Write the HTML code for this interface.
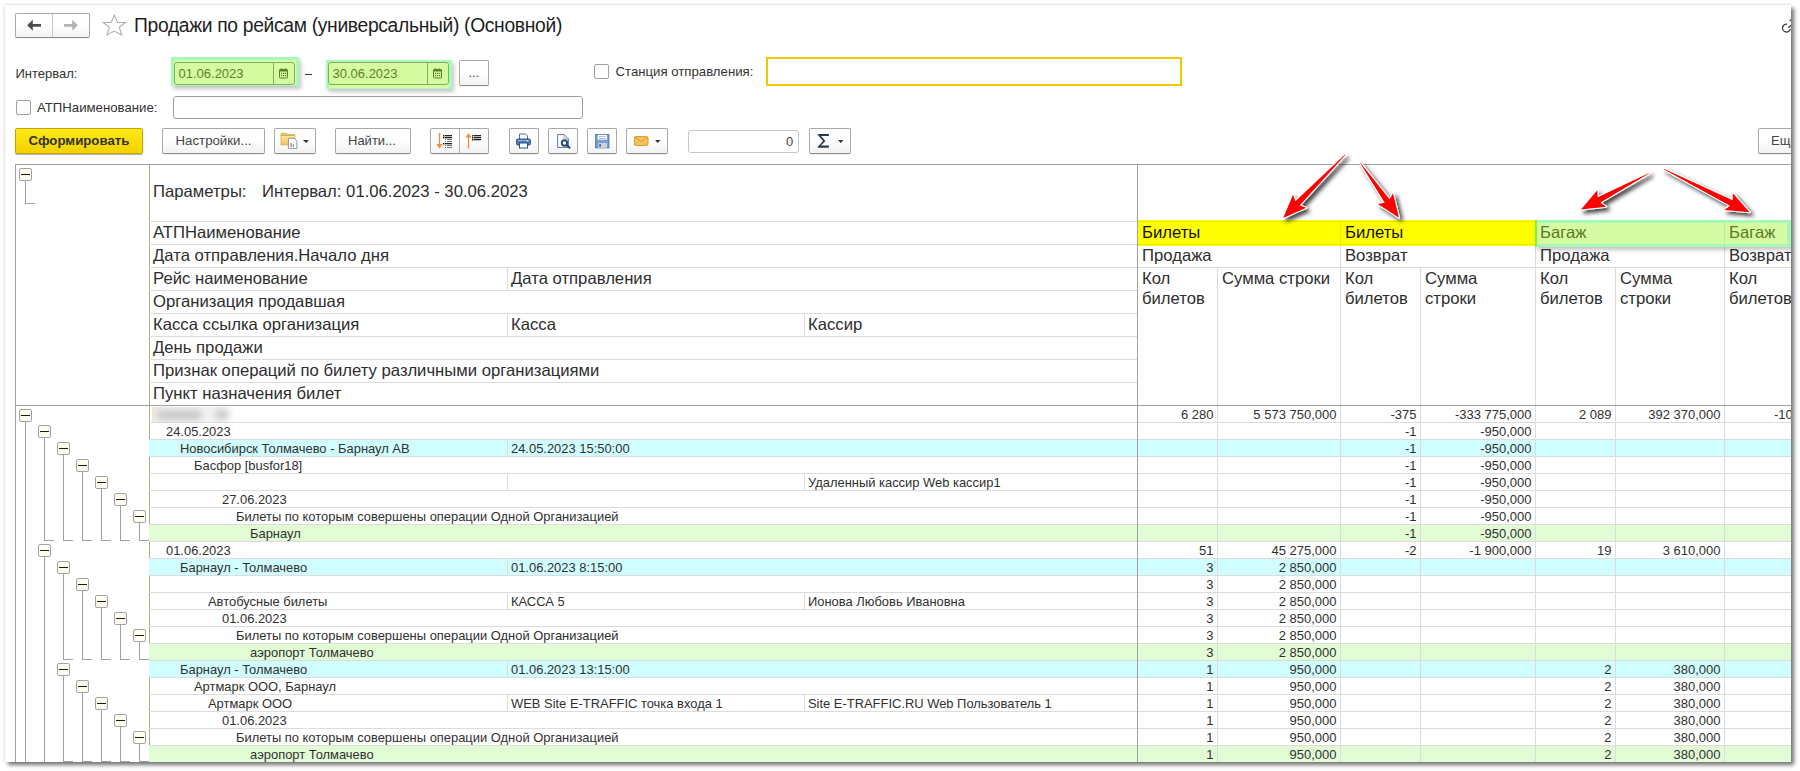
<!DOCTYPE html>
<html><head><meta charset="utf-8"><style>
html,body{margin:0;padding:0;background:#fff;}
body{width:1800px;height:771px;overflow:hidden;position:relative;font-family:"Liberation Sans", sans-serif;color:#333;}
.a{position:absolute;}
.t{position:absolute;white-space:pre;line-height:1;}
#frame{position:absolute;left:5px;top:5px;width:1786px;height:757px;background:#fff;
 box-shadow:3px 3px 4px rgba(0,0,0,0.55), -1px -1px 2px rgba(0,0,0,0.10);overflow:hidden;}
#in{position:absolute;left:-5px;top:-5px;width:1800px;height:771px;}
.btn{position:absolute;box-sizing:border-box;border:1px solid #a9a9a9;border-radius:2px;
 background:linear-gradient(#ffffff 0%,#ffffff 45%,#f2f2f2 100%);border-bottom-color:#8f8f8f;box-shadow:0 0.5px 0.5px rgba(0,0,0,0.12);}
.hl{position:absolute;background:#dcdcdc;height:1px;}
.vl{position:absolute;background:#dcdcdc;width:1px;}
.ht{position:absolute;white-space:pre;font-size:16.68px;color:#2e2e2e;line-height:23px;}
.dt{position:absolute;white-space:pre;font-size:12.93px;color:#303030;line-height:17px;}
.num{position:absolute;white-space:pre;font-size:13px;color:#303030;line-height:17px;text-align:right;}
.box{position:absolute;width:11px;height:11px;border:1px solid #a3a3a3;border-radius:2px;background:#fffdf0;}
.box:after{content:"";position:absolute;left:1px;top:5px;width:9px;height:1px;background:#1a1a1a;}
.tl{position:absolute;background:#a0a0a0;}
</style></head><body>
<div id="frame"><div id="in">

<div class="btn" style="left:15px;top:13px;width:75px;height:25px;"></div>
<div class="a" style="left:52px;top:14px;width:1px;height:23px;background:#c8c8c8"></div>
<svg class="a" style="left:15px;top:13px" width="75" height="25">
<path d="M12.2 12.3 L17.8 6.8 L17.8 10.9 L26 10.9 L26 13.8 L17.8 13.8 L17.8 17.8 Z" fill="#4d4d4d"/>
<path d="M62.9 12.3 L57.2 6.8 L57.2 10.9 L49 10.9 L49 13.8 L57.2 13.8 L57.2 17.8 Z" fill="#b3b3b3"/>
</svg>
<svg class="a" style="left:102px;top:14px" width="25" height="23">
<path d="M12.3 1.2 L15.6 8.5 L23.4 8.5 L17.3 13.3 L19.6 21 L12.3 17.1 L5 21 L7.3 13.3 L1.2 8.5 L9 8.5 Z" fill="none" stroke="#a9b0b8" stroke-width="1.1" stroke-linejoin="miter"/>
</svg>
<div class="t" style="left:134px;top:15.5px;font-size:19.3px;letter-spacing:-0.33px;color:#1e1e1e;">Продажи по рейсам (универсальный) (Основной)</div>
<svg class="a" style="left:1779px;top:17px" width="20" height="18">
<path d="M8.2 7.1 A4 4 0 1 0 11.4 12" fill="none" stroke="#3a3a3a" stroke-width="1.3"/>
<path d="M9.3 10.7 L12.3 8.2" fill="none" stroke="#3a3a3a" stroke-width="1.3"/>
<path d="M10.6 4 L12.3 2.8" fill="none" stroke="#3a3a3a" stroke-width="1.3"/>
</svg>
<div class="t" style="left:15.5px;top:67px;font-size:13px;color:#333;">Интервал:</div>
<div class="a" style="left:171px;top:57px;width:128px;height:29px;background:#a6fbb8;box-shadow:2px 3px 4px rgba(60,40,60,0.28);"></div>
<div class="a" style="left:173.5px;top:60px;width:122.5px;height:25px;background:#d6fca5;"></div>
<div class="a" style="left:173.5px;top:62px;width:121.5px;height:23px;box-sizing:border-box;border:1px solid #86ad66;border-radius:3px;background:#d5fca0;"></div>
<div class="a" style="left:273px;top:62px;width:1px;height:23px;background:#8aab5e;"></div>
<div class="t" style="left:178.5px;top:67px;font-size:13px;color:#62802a;">01.06.2023</div>
<svg class="a" style="left:279px;top:68px" width="10" height="11">
<rect x="0.5" y="1.5" width="8" height="8.5" rx="0.8" fill="none" stroke="#5d7d2a" stroke-width="1"/>
<rect x="0.5" y="1.5" width="8" height="2" fill="#5d7d2a"/>
<rect x="1.8" y="0.3" width="1.1" height="2" fill="#5d7d2a"/><rect x="6.1" y="0.3" width="1.1" height="2" fill="#5d7d2a"/>
<g fill="#5d7d2a"><rect x="2" y="4.8" width="1.2" height="1.2"/><rect x="4" y="4.8" width="1.2" height="1.2"/><rect x="6" y="4.8" width="1.2" height="1.2"/>
<rect x="2" y="7" width="1.2" height="1.2"/><rect x="4" y="7" width="1.2" height="1.2"/><rect x="6" y="7" width="1.2" height="1.2"/></g>
</svg>
<div class="a" style="left:305px;top:74px;width:7px;height:1px;background:#333;"></div>
<div class="a" style="left:326px;top:60px;width:126px;height:29px;background:#a6fbb8;box-shadow:2px 3px 4px rgba(60,40,60,0.28);"></div>
<div class="a" style="left:328.5px;top:63px;width:120.5px;height:25px;background:#d6fca5;"></div>
<div class="a" style="left:327.5px;top:62px;width:121.5px;height:23px;box-sizing:border-box;border:1px solid #86ad66;border-radius:3px;background:#d5fca0;"></div>
<div class="a" style="left:427px;top:62px;width:1px;height:23px;background:#8aab5e;"></div>
<div class="t" style="left:332.5px;top:67px;font-size:13px;color:#62802a;">30.06.2023</div>
<svg class="a" style="left:433px;top:68px" width="10" height="11">
<rect x="0.5" y="1.5" width="8" height="8.5" rx="0.8" fill="none" stroke="#5d7d2a" stroke-width="1"/>
<rect x="0.5" y="1.5" width="8" height="2" fill="#5d7d2a"/>
<rect x="1.8" y="0.3" width="1.1" height="2" fill="#5d7d2a"/><rect x="6.1" y="0.3" width="1.1" height="2" fill="#5d7d2a"/>
<g fill="#5d7d2a"><rect x="2" y="4.8" width="1.2" height="1.2"/><rect x="4" y="4.8" width="1.2" height="1.2"/><rect x="6" y="4.8" width="1.2" height="1.2"/>
<rect x="2" y="7" width="1.2" height="1.2"/><rect x="4" y="7" width="1.2" height="1.2"/><rect x="6" y="7" width="1.2" height="1.2"/></g>
</svg>
<div class="btn" style="left:459px;top:60px;width:30px;height:26px;"></div>
<div class="t" style="left:468.5px;top:66px;font-size:13px;color:#444;">...</div>
<div class="a" style="left:594px;top:64px;width:15px;height:15px;box-sizing:border-box;border:1px solid #a0a0a0;border-radius:2px;background:#fff;"></div>
<div class="t" style="left:615.5px;top:65px;font-size:13.2px;color:#333;">Станция отправления:</div>
<div class="a" style="left:766px;top:57px;width:416px;height:29px;box-sizing:border-box;border:2px solid #f4c800;"></div>
<div class="a" style="left:16px;top:100px;width:15px;height:15px;box-sizing:border-box;border:1px solid #a0a0a0;border-radius:2px;background:#fff;"></div>
<div class="t" style="left:37px;top:101px;font-size:13.2px;color:#333;">АТПНаименование:</div>
<div class="a" style="left:173px;top:96px;width:410px;height:23px;box-sizing:border-box;border:1px solid #a0a0a0;border-radius:3px;background:#fff;"></div>
<div class="a" style="left:15px;top:128px;width:128px;height:26px;box-sizing:border-box;border:1px solid #c3a600;border-radius:2px;background:linear-gradient(#ffe81a,#f2d200);box-shadow:0 1px 1px rgba(0,0,0,0.3);"></div>
<div class="t" style="left:28.5px;top:133.5px;font-size:13.25px;font-weight:bold;color:#333;">Сформировать</div>
<div class="btn" style="left:162px;top:128px;width:103px;height:26px;"></div>
<div class="t" style="left:175.5px;top:134px;font-size:13.25px;color:#444;">Настройки...</div>
<div class="btn" style="left:274px;top:128px;width:42px;height:26px;"></div>
<svg class="a" style="left:280px;top:132px" width="32" height="18">
<defs><linearGradient id="fg" x1="0" y1="0" x2="0" y2="1"><stop offset="0" stop-color="#fbe7a2"/><stop offset="1" stop-color="#eec35a"/></linearGradient></defs>
<path d="M1 4 L1 2 Q1 1.2 1.8 1.2 L6.2 1.2 L7.6 2.6 L14.4 2.6 L14.4 4 Z" fill="#eec35a" stroke="#d2a347" stroke-width="0.7"/>
<rect x="1" y="3.6" width="14" height="9.3" fill="url(#fg)" stroke="#d2a347" stroke-width="0.7"/>
<path d="M8.4 6.3 L14.5 6.3 L16.9 8.7 L16.9 16.4 L8.4 16.4 Z" fill="#fff" stroke="#7d8fa3" stroke-width="0.9"/>
<rect x="10.6" y="11" width="1" height="4" fill="#e23a3a"/><rect x="12.8" y="12" width="1" height="3" fill="#2ea84a"/>
<path d="M23 8 L29 8 L26 11 Z" fill="#333"/>
</svg>
<div class="btn" style="left:335px;top:128px;width:76px;height:26px;"></div>
<div class="t" style="left:348px;top:134px;font-size:13px;color:#444;">Найти...</div>
<div class="btn" style="left:430px;top:128px;width:59px;height:26px;"></div>
<div class="a" style="left:459px;top:129px;width:1px;height:24px;background:#b0b0b0;"></div>
<svg class="a" style="left:430px;top:128px" width="59" height="26">
<path d="M9.5 5 L9.5 18" stroke="#f08a3c" stroke-width="1.3"/>
<path d="M6.5 16 L12.5 16 L9.5 20.5 Z" fill="#f08a3c"/>
<g fill="#222"><rect x="13" y="7" width="1.5" height="1.5"/><rect x="15" y="7" width="7" height="1.3"/>
<rect x="13" y="9" width="1.5" height="1.5"/><rect x="15" y="9" width="7" height="1.3"/>
<rect x="13" y="15" width="1.5" height="1.5"/><rect x="15" y="15" width="7" height="1.3"/></g>
<g fill="#777"><rect x="15" y="11" width="1" height="1"/><rect x="17" y="11" width="5" height="1"/>
<rect x="15" y="13" width="1" height="1"/><rect x="17" y="13" width="5" height="1"/>
<rect x="15" y="17" width="1" height="1"/><rect x="17" y="17" width="5" height="1"/>
<rect x="15" y="19" width="1" height="1"/><rect x="17" y="19" width="5" height="1"/></g>
<path d="M38.5 8 L38.5 20.5" stroke="#f08a3c" stroke-width="1.3"/>
<path d="M35.5 9.5 L41.5 9.5 L38.5 5 Z" fill="#f08a3c"/>
<g fill="#222"><rect x="42" y="7" width="1.5" height="1.5"/><rect x="44" y="7" width="7" height="1.3"/>
<rect x="42" y="9" width="1.5" height="1.5"/><rect x="44" y="9" width="7" height="1.3"/>
<rect x="42" y="11" width="1.5" height="1.5"/><rect x="44" y="11" width="7" height="1.3"/></g>
</svg>
<div class="btn" style="left:509px;top:128px;width:30px;height:26px;"></div>
<svg class="a" style="left:509px;top:128px" width="30" height="26">
<path d="M10.5 6 L16.5 6 L18.5 8 L18.5 12 L10.5 12 Z" fill="#fff" stroke="#4a6d99" stroke-width="1"/>
<rect x="7.5" y="11" width="14" height="6" rx="1.5" fill="#4f79b0" stroke="#2f5283" stroke-width="1"/>
<rect x="9" y="12" width="11" height="1" fill="#9db7d8"/>
<rect x="10.5" y="15" width="8" height="5" fill="#fff" stroke="#2f5283" stroke-width="1"/>
<rect x="18" y="12.5" width="1" height="1" fill="#fff"/>
</svg>
<div class="btn" style="left:548px;top:128px;width:30px;height:26px;"></div>
<svg class="a" style="left:548px;top:128px" width="30" height="26">
<path d="M9.6 6.6 L16.1 6.6 L20.4 10.9 L20.4 19.4 L9.6 19.4 Z" fill="#fff" stroke="#4a6a92" stroke-width="0.9"/>
<path d="M16.1 6.6 L16.1 10.9 L20.4 10.9" fill="none" stroke="#7d93ad" stroke-width="0.7"/>
<circle cx="16.5" cy="15" r="2.7" fill="#fff" stroke="#1f4c7a" stroke-width="1.9"/>
<path d="M18.4 17 L22.2 20.3" stroke="#1f4c7a" stroke-width="2.1"/>
</svg>
<div class="btn" style="left:587px;top:128px;width:30px;height:26px;"></div>
<svg class="a" style="left:587px;top:128px" width="30" height="26">
<rect x="8.7" y="6.6" width="13.2" height="13.2" fill="#7ba0d8" stroke="#4d72aa" stroke-width="1"/>
<rect x="10.7" y="6.9" width="9.2" height="4.8" fill="#fff"/>
<rect x="11.7" y="8.3" width="7" height="0.8" fill="#8aa8d4"/><rect x="11.7" y="10" width="7" height="0.8" fill="#8aa8d4"/>
<rect x="11.2" y="15" width="8.6" height="4.8" fill="#cdd6da"/>
<rect x="12.2" y="16" width="1.8" height="3" fill="#4d72aa"/>
</svg>
<div class="btn" style="left:626px;top:128px;width:42px;height:26px;"></div>
<svg class="a" style="left:626px;top:128px" width="42" height="26">
<rect x="8.4" y="8.6" width="13.6" height="8.8" rx="1.5" fill="#f3c660" stroke="#d4962a" stroke-width="1"/>
<path d="M9 9.4 L15.2 13.6 L21.5 9.4" fill="none" stroke="#d4962a" stroke-width="0.9"/>
<path d="M9 17 L13.5 12.8 M21.5 17 L17 12.8" fill="none" stroke="#e0aa45" stroke-width="0.7"/>
<path d="M29 12 L34.5 12 L31.75 15 Z" fill="#333"/>
</svg>
<div class="a" style="left:688px;top:130px;width:111px;height:23px;box-sizing:border-box;border:1px solid #c8c8c8;border-radius:3px;background:#fff;"></div>
<div class="t" style="left:786px;top:135px;font-size:13px;color:#444;">0</div>
<div class="btn" style="left:809px;top:128px;width:42px;height:26px;"></div>
<svg class="a" style="left:809px;top:128px" width="42" height="26">
<path d="M8.7 5.9 L19.9 5.9 L19.9 8.1 L12 8.1 L16.4 12.9 L12 17.6 L19.9 17.6 L19.9 19.8 L8.7 19.8 L8.7 19.1 L14 12.9 L8.7 6.7 Z" fill="#2a3a46"/>
<path d="M29 12 L34.5 12 L31.75 15 Z" fill="#333"/>
</svg>
<div class="btn" style="left:1758px;top:128px;width:60px;height:26px;"></div>
<div class="t" style="left:1771px;top:134px;font-size:13px;color:#444;">Ещё</div>
<div class="a" style="left:15px;top:164px;width:1776px;height:1px;background:#a0a0a0;"></div>
<div class="a" style="left:15px;top:164px;width:1px;height:600px;background:#a0a0a0;"></div>
<div class="a" style="left:15px;top:405px;width:1776px;height:1px;background:#a0a0a0;"></div>
<div class="a" style="left:149px;top:165px;width:1px;height:240px;background:#b3a97f;"></div>
<div class="hl" style="left:149px;top:221px;width:988px;"></div>
<div class="hl" style="left:149px;top:244px;width:988px;"></div>
<div class="hl" style="left:149px;top:267px;width:988px;"></div>
<div class="hl" style="left:149px;top:290px;width:988px;"></div>
<div class="hl" style="left:149px;top:313px;width:988px;"></div>
<div class="hl" style="left:149px;top:336px;width:988px;"></div>
<div class="hl" style="left:149px;top:359px;width:988px;"></div>
<div class="hl" style="left:149px;top:382px;width:988px;"></div>
<div class="hl" style="left:1138px;top:221px;width:653px;"></div>
<div class="hl" style="left:1138px;top:244px;width:653px;"></div>
<div class="hl" style="left:1138px;top:267px;width:653px;"></div>
<div class="vl" style="left:507px;top:268px;height:22px;"></div>
<div class="vl" style="left:507px;top:314px;height:22px;"></div>
<div class="vl" style="left:804px;top:314px;height:22px;"></div>
<div class="vl" style="left:1340px;top:222px;height:183px;"></div>
<div class="vl" style="left:1535px;top:222px;height:183px;"></div>
<div class="vl" style="left:1724px;top:222px;height:183px;"></div>
<div class="vl" style="left:1217px;top:268px;height:137px;"></div>
<div class="vl" style="left:1420px;top:268px;height:137px;"></div>
<div class="vl" style="left:1615px;top:268px;height:137px;"></div>
<div class="box" style="left:19px;top:168px;"></div>
<div class="tl" style="left:25px;top:180px;width:1px;height:23px;"></div>
<div class="tl" style="left:25px;top:203px;width:10px;height:1px;"></div>
<div class="ht" style="left:153px;top:180px;">Параметры:</div>
<div class="ht" style="left:262px;top:180px;">Интервал: 01.06.2023 - 30.06.2023</div>
<div class="ht" style="left:153px;top:221px;">АТПНаименование</div>
<div class="ht" style="left:153px;top:244px;">Дата отправления.Начало дня</div>
<div class="ht" style="left:153px;top:267px;">Рейс наименование</div>
<div class="ht" style="left:153px;top:290px;">Организация продавшая</div>
<div class="ht" style="left:153px;top:313px;">Касса ссылка организация</div>
<div class="ht" style="left:153px;top:336px;">День продажи</div>
<div class="ht" style="left:153px;top:359px;">Признак операций по билету различными организациями</div>
<div class="ht" style="left:153px;top:382px;">Пункт назначения билет</div>
<div class="ht" style="left:511px;top:267px;">Дата отправления</div>
<div class="ht" style="left:511px;top:313px;">Касса</div>
<div class="ht" style="left:808px;top:313px;">Кассир</div>
<div class="a" style="left:1138px;top:220px;width:397px;height:26px;background:#ffff00;"></div>
<div class="a" style="left:1138px;top:221px;width:397px;height:1px;background:#ecec00;"></div>
<div class="a" style="left:1138px;top:244px;width:397px;height:1px;background:#ecec00;"></div>
<div class="a" style="left:1340px;top:220px;width:1px;height:26px;background:#ecec00;"></div>
<div class="a" style="left:1535px;top:220px;width:256px;height:27px;background:#a6f8b6;box-shadow:2px 3px 4px rgba(60,40,60,0.28);"></div>
<div class="a" style="left:1535px;top:220px;width:2px;height:27px;background:#7ef050;"></div>
<div class="a" style="left:1537px;top:222.5px;width:250px;height:21.5px;background:#d5fca5;"></div>
<div class="a" style="left:1724px;top:222px;width:1px;height:22px;background:#bfe8a0;"></div>
<div class="ht" style="left:1142px;top:221px;color:#111;">Билеты</div>
<div class="ht" style="left:1345px;top:221px;color:#111;">Билеты</div>
<div class="ht" style="left:1540px;top:221px;color:#5d7a20;">Багаж</div>
<div class="ht" style="left:1729px;top:221px;color:#5d7a20;">Багаж</div>
<div class="ht" style="left:1142px;top:244px;">Продажа</div>
<div class="ht" style="left:1345px;top:244px;">Возврат</div>
<div class="ht" style="left:1540px;top:244px;">Продажа</div>
<div class="ht" style="left:1729px;top:244px;">Возврат</div>
<div class="ht" style="left:1142px;top:267px;">Кол</div>
<div class="ht" style="left:1142px;top:286.5px;">билетов</div>
<div class="ht" style="left:1222px;top:267px;">Сумма строки</div>
<div class="ht" style="left:1345px;top:267px;">Кол</div>
<div class="ht" style="left:1345px;top:286.5px;">билетов</div>
<div class="ht" style="left:1425px;top:267px;">Сумма</div>
<div class="ht" style="left:1425px;top:286.5px;">строки</div>
<div class="ht" style="left:1540px;top:267px;">Кол</div>
<div class="ht" style="left:1540px;top:286.5px;">билетов</div>
<div class="ht" style="left:1620px;top:267px;">Сумма</div>
<div class="ht" style="left:1620px;top:286.5px;">строки</div>
<div class="ht" style="left:1729px;top:267px;">Кол</div>
<div class="ht" style="left:1729px;top:286.5px;">билетов</div>
<div class="a" style="left:149px;top:406px;width:1px;height:16px;background:#b3a97f;"></div>
<div class="hl" style="left:149px;top:422px;width:1642px;"></div>
<div class="vl" style="left:1217px;top:406px;height:16px;"></div>
<div class="vl" style="left:1340px;top:406px;height:16px;"></div>
<div class="vl" style="left:1420px;top:406px;height:16px;"></div>
<div class="vl" style="left:1535px;top:406px;height:16px;"></div>
<div class="vl" style="left:1615px;top:406px;height:16px;"></div>
<div class="vl" style="left:1724px;top:406px;height:16px;"></div>
<div class="num" style="left:1013.5px;width:200px;top:406px;">6 280</div>
<div class="num" style="left:1136.5px;width:200px;top:406px;">5 573 750,000</div>
<div class="num" style="left:1216.5px;width:200px;top:406px;">-375</div>
<div class="num" style="left:1331.5px;width:200px;top:406px;">-333 775,000</div>
<div class="num" style="left:1411.5px;width:200px;top:406px;">2 089</div>
<div class="num" style="left:1520.5px;width:200px;top:406px;">392 370,000</div>
<div class="num" style="left:1600.0px;width:200px;top:406px;">-108</div>
<div class="a" style="left:149px;top:423px;width:1px;height:16px;background:#b3a97f;"></div>
<div class="hl" style="left:149px;top:439px;width:1642px;"></div>
<div class="vl" style="left:1217px;top:423px;height:16px;"></div>
<div class="vl" style="left:1340px;top:423px;height:16px;"></div>
<div class="vl" style="left:1420px;top:423px;height:16px;"></div>
<div class="vl" style="left:1535px;top:423px;height:16px;"></div>
<div class="vl" style="left:1615px;top:423px;height:16px;"></div>
<div class="vl" style="left:1724px;top:423px;height:16px;"></div>
<div class="dt" style="left:166px;top:423px;">24.05.2023</div>
<div class="num" style="left:1216.5px;width:200px;top:423px;">-1</div>
<div class="num" style="left:1331.5px;width:200px;top:423px;">-950,000</div>
<div class="a" style="left:149px;top:440px;width:1642px;height:16px;background:#d0fdfd;"></div>
<div class="hl" style="left:149px;top:456px;width:1642px;"></div>
<div class="vl" style="left:1217px;top:440px;height:16px;"></div>
<div class="vl" style="left:1340px;top:440px;height:16px;"></div>
<div class="vl" style="left:1420px;top:440px;height:16px;"></div>
<div class="vl" style="left:1535px;top:440px;height:16px;"></div>
<div class="vl" style="left:1615px;top:440px;height:16px;"></div>
<div class="vl" style="left:1724px;top:440px;height:16px;"></div>
<div class="vl" style="left:507px;top:440px;height:16px;"></div>
<div class="dt" style="left:180px;top:440px;">Новосибирск Толмачево - Барнаул АВ</div>
<div class="dt" style="left:511px;top:440px;">24.05.2023 15:50:00</div>
<div class="num" style="left:1216.5px;width:200px;top:440px;">-1</div>
<div class="num" style="left:1331.5px;width:200px;top:440px;">-950,000</div>
<div class="a" style="left:149px;top:457px;width:1px;height:16px;background:#b3a97f;"></div>
<div class="hl" style="left:149px;top:473px;width:1642px;"></div>
<div class="vl" style="left:1217px;top:457px;height:16px;"></div>
<div class="vl" style="left:1340px;top:457px;height:16px;"></div>
<div class="vl" style="left:1420px;top:457px;height:16px;"></div>
<div class="vl" style="left:1535px;top:457px;height:16px;"></div>
<div class="vl" style="left:1615px;top:457px;height:16px;"></div>
<div class="vl" style="left:1724px;top:457px;height:16px;"></div>
<div class="dt" style="left:194px;top:457px;">Басфор [busfor18]</div>
<div class="num" style="left:1216.5px;width:200px;top:457px;">-1</div>
<div class="num" style="left:1331.5px;width:200px;top:457px;">-950,000</div>
<div class="a" style="left:149px;top:474px;width:1px;height:16px;background:#b3a97f;"></div>
<div class="hl" style="left:149px;top:490px;width:1642px;"></div>
<div class="vl" style="left:1217px;top:474px;height:16px;"></div>
<div class="vl" style="left:1340px;top:474px;height:16px;"></div>
<div class="vl" style="left:1420px;top:474px;height:16px;"></div>
<div class="vl" style="left:1535px;top:474px;height:16px;"></div>
<div class="vl" style="left:1615px;top:474px;height:16px;"></div>
<div class="vl" style="left:1724px;top:474px;height:16px;"></div>
<div class="vl" style="left:507px;top:474px;height:16px;"></div>
<div class="vl" style="left:804px;top:474px;height:16px;"></div>
<div class="dt" style="left:808px;top:474px;">Удаленный кассир Web кассир1</div>
<div class="num" style="left:1216.5px;width:200px;top:474px;">-1</div>
<div class="num" style="left:1331.5px;width:200px;top:474px;">-950,000</div>
<div class="a" style="left:149px;top:491px;width:1px;height:16px;background:#b3a97f;"></div>
<div class="hl" style="left:149px;top:507px;width:1642px;"></div>
<div class="vl" style="left:1217px;top:491px;height:16px;"></div>
<div class="vl" style="left:1340px;top:491px;height:16px;"></div>
<div class="vl" style="left:1420px;top:491px;height:16px;"></div>
<div class="vl" style="left:1535px;top:491px;height:16px;"></div>
<div class="vl" style="left:1615px;top:491px;height:16px;"></div>
<div class="vl" style="left:1724px;top:491px;height:16px;"></div>
<div class="dt" style="left:222px;top:491px;">27.06.2023</div>
<div class="num" style="left:1216.5px;width:200px;top:491px;">-1</div>
<div class="num" style="left:1331.5px;width:200px;top:491px;">-950,000</div>
<div class="a" style="left:149px;top:508px;width:1px;height:16px;background:#b3a97f;"></div>
<div class="hl" style="left:149px;top:524px;width:1642px;"></div>
<div class="vl" style="left:1217px;top:508px;height:16px;"></div>
<div class="vl" style="left:1340px;top:508px;height:16px;"></div>
<div class="vl" style="left:1420px;top:508px;height:16px;"></div>
<div class="vl" style="left:1535px;top:508px;height:16px;"></div>
<div class="vl" style="left:1615px;top:508px;height:16px;"></div>
<div class="vl" style="left:1724px;top:508px;height:16px;"></div>
<div class="dt" style="left:236px;top:508px;">Билеты по которым совершены операции Одной Организацией</div>
<div class="num" style="left:1216.5px;width:200px;top:508px;">-1</div>
<div class="num" style="left:1331.5px;width:200px;top:508px;">-950,000</div>
<div class="a" style="left:149px;top:525px;width:1642px;height:16px;background:#e2fcd6;"></div>
<div class="hl" style="left:149px;top:541px;width:1642px;"></div>
<div class="vl" style="left:1217px;top:525px;height:16px;"></div>
<div class="vl" style="left:1340px;top:525px;height:16px;"></div>
<div class="vl" style="left:1420px;top:525px;height:16px;"></div>
<div class="vl" style="left:1535px;top:525px;height:16px;"></div>
<div class="vl" style="left:1615px;top:525px;height:16px;"></div>
<div class="vl" style="left:1724px;top:525px;height:16px;"></div>
<div class="dt" style="left:250px;top:525px;">Барнаул</div>
<div class="num" style="left:1216.5px;width:200px;top:525px;">-1</div>
<div class="num" style="left:1331.5px;width:200px;top:525px;">-950,000</div>
<div class="a" style="left:149px;top:542px;width:1px;height:16px;background:#b3a97f;"></div>
<div class="hl" style="left:149px;top:558px;width:1642px;"></div>
<div class="vl" style="left:1217px;top:542px;height:16px;"></div>
<div class="vl" style="left:1340px;top:542px;height:16px;"></div>
<div class="vl" style="left:1420px;top:542px;height:16px;"></div>
<div class="vl" style="left:1535px;top:542px;height:16px;"></div>
<div class="vl" style="left:1615px;top:542px;height:16px;"></div>
<div class="vl" style="left:1724px;top:542px;height:16px;"></div>
<div class="dt" style="left:166px;top:542px;">01.06.2023</div>
<div class="num" style="left:1013.5px;width:200px;top:542px;">51</div>
<div class="num" style="left:1136.5px;width:200px;top:542px;">45 275,000</div>
<div class="num" style="left:1216.5px;width:200px;top:542px;">-2</div>
<div class="num" style="left:1331.5px;width:200px;top:542px;">-1 900,000</div>
<div class="num" style="left:1411.5px;width:200px;top:542px;">19</div>
<div class="num" style="left:1520.5px;width:200px;top:542px;">3 610,000</div>
<div class="a" style="left:149px;top:559px;width:1642px;height:16px;background:#d0fdfd;"></div>
<div class="hl" style="left:149px;top:575px;width:1642px;"></div>
<div class="vl" style="left:1217px;top:559px;height:16px;"></div>
<div class="vl" style="left:1340px;top:559px;height:16px;"></div>
<div class="vl" style="left:1420px;top:559px;height:16px;"></div>
<div class="vl" style="left:1535px;top:559px;height:16px;"></div>
<div class="vl" style="left:1615px;top:559px;height:16px;"></div>
<div class="vl" style="left:1724px;top:559px;height:16px;"></div>
<div class="vl" style="left:507px;top:559px;height:16px;"></div>
<div class="dt" style="left:180px;top:559px;">Барнаул - Толмачево</div>
<div class="dt" style="left:511px;top:559px;">01.06.2023 8:15:00</div>
<div class="num" style="left:1013.5px;width:200px;top:559px;">3</div>
<div class="num" style="left:1136.5px;width:200px;top:559px;">2 850,000</div>
<div class="a" style="left:149px;top:576px;width:1px;height:16px;background:#b3a97f;"></div>
<div class="hl" style="left:149px;top:592px;width:1642px;"></div>
<div class="vl" style="left:1217px;top:576px;height:16px;"></div>
<div class="vl" style="left:1340px;top:576px;height:16px;"></div>
<div class="vl" style="left:1420px;top:576px;height:16px;"></div>
<div class="vl" style="left:1535px;top:576px;height:16px;"></div>
<div class="vl" style="left:1615px;top:576px;height:16px;"></div>
<div class="vl" style="left:1724px;top:576px;height:16px;"></div>
<div class="num" style="left:1013.5px;width:200px;top:576px;">3</div>
<div class="num" style="left:1136.5px;width:200px;top:576px;">2 850,000</div>
<div class="a" style="left:149px;top:593px;width:1px;height:16px;background:#b3a97f;"></div>
<div class="hl" style="left:149px;top:609px;width:1642px;"></div>
<div class="vl" style="left:1217px;top:593px;height:16px;"></div>
<div class="vl" style="left:1340px;top:593px;height:16px;"></div>
<div class="vl" style="left:1420px;top:593px;height:16px;"></div>
<div class="vl" style="left:1535px;top:593px;height:16px;"></div>
<div class="vl" style="left:1615px;top:593px;height:16px;"></div>
<div class="vl" style="left:1724px;top:593px;height:16px;"></div>
<div class="vl" style="left:507px;top:593px;height:16px;"></div>
<div class="vl" style="left:804px;top:593px;height:16px;"></div>
<div class="dt" style="left:208px;top:593px;">Автобусные билеты</div>
<div class="dt" style="left:511px;top:593px;">КАССА 5</div>
<div class="dt" style="left:808px;top:593px;">Ионова Любовь Ивановна</div>
<div class="num" style="left:1013.5px;width:200px;top:593px;">3</div>
<div class="num" style="left:1136.5px;width:200px;top:593px;">2 850,000</div>
<div class="a" style="left:149px;top:610px;width:1px;height:16px;background:#b3a97f;"></div>
<div class="hl" style="left:149px;top:626px;width:1642px;"></div>
<div class="vl" style="left:1217px;top:610px;height:16px;"></div>
<div class="vl" style="left:1340px;top:610px;height:16px;"></div>
<div class="vl" style="left:1420px;top:610px;height:16px;"></div>
<div class="vl" style="left:1535px;top:610px;height:16px;"></div>
<div class="vl" style="left:1615px;top:610px;height:16px;"></div>
<div class="vl" style="left:1724px;top:610px;height:16px;"></div>
<div class="dt" style="left:222px;top:610px;">01.06.2023</div>
<div class="num" style="left:1013.5px;width:200px;top:610px;">3</div>
<div class="num" style="left:1136.5px;width:200px;top:610px;">2 850,000</div>
<div class="a" style="left:149px;top:627px;width:1px;height:16px;background:#b3a97f;"></div>
<div class="hl" style="left:149px;top:643px;width:1642px;"></div>
<div class="vl" style="left:1217px;top:627px;height:16px;"></div>
<div class="vl" style="left:1340px;top:627px;height:16px;"></div>
<div class="vl" style="left:1420px;top:627px;height:16px;"></div>
<div class="vl" style="left:1535px;top:627px;height:16px;"></div>
<div class="vl" style="left:1615px;top:627px;height:16px;"></div>
<div class="vl" style="left:1724px;top:627px;height:16px;"></div>
<div class="dt" style="left:236px;top:627px;">Билеты по которым совершены операции Одной Организацией</div>
<div class="num" style="left:1013.5px;width:200px;top:627px;">3</div>
<div class="num" style="left:1136.5px;width:200px;top:627px;">2 850,000</div>
<div class="a" style="left:149px;top:644px;width:1642px;height:16px;background:#e2fcd6;"></div>
<div class="hl" style="left:149px;top:660px;width:1642px;"></div>
<div class="vl" style="left:1217px;top:644px;height:16px;"></div>
<div class="vl" style="left:1340px;top:644px;height:16px;"></div>
<div class="vl" style="left:1420px;top:644px;height:16px;"></div>
<div class="vl" style="left:1535px;top:644px;height:16px;"></div>
<div class="vl" style="left:1615px;top:644px;height:16px;"></div>
<div class="vl" style="left:1724px;top:644px;height:16px;"></div>
<div class="dt" style="left:250px;top:644px;">аэропорт Толмачево</div>
<div class="num" style="left:1013.5px;width:200px;top:644px;">3</div>
<div class="num" style="left:1136.5px;width:200px;top:644px;">2 850,000</div>
<div class="a" style="left:149px;top:661px;width:1642px;height:16px;background:#d0fdfd;"></div>
<div class="hl" style="left:149px;top:677px;width:1642px;"></div>
<div class="vl" style="left:1217px;top:661px;height:16px;"></div>
<div class="vl" style="left:1340px;top:661px;height:16px;"></div>
<div class="vl" style="left:1420px;top:661px;height:16px;"></div>
<div class="vl" style="left:1535px;top:661px;height:16px;"></div>
<div class="vl" style="left:1615px;top:661px;height:16px;"></div>
<div class="vl" style="left:1724px;top:661px;height:16px;"></div>
<div class="vl" style="left:507px;top:661px;height:16px;"></div>
<div class="dt" style="left:180px;top:661px;">Барнаул - Толмачево</div>
<div class="dt" style="left:511px;top:661px;">01.06.2023 13:15:00</div>
<div class="num" style="left:1013.5px;width:200px;top:661px;">1</div>
<div class="num" style="left:1136.5px;width:200px;top:661px;">950,000</div>
<div class="num" style="left:1411.5px;width:200px;top:661px;">2</div>
<div class="num" style="left:1520.5px;width:200px;top:661px;">380,000</div>
<div class="a" style="left:149px;top:678px;width:1px;height:16px;background:#b3a97f;"></div>
<div class="hl" style="left:149px;top:694px;width:1642px;"></div>
<div class="vl" style="left:1217px;top:678px;height:16px;"></div>
<div class="vl" style="left:1340px;top:678px;height:16px;"></div>
<div class="vl" style="left:1420px;top:678px;height:16px;"></div>
<div class="vl" style="left:1535px;top:678px;height:16px;"></div>
<div class="vl" style="left:1615px;top:678px;height:16px;"></div>
<div class="vl" style="left:1724px;top:678px;height:16px;"></div>
<div class="dt" style="left:194px;top:678px;">Артмарк ООО, Барнаул</div>
<div class="num" style="left:1013.5px;width:200px;top:678px;">1</div>
<div class="num" style="left:1136.5px;width:200px;top:678px;">950,000</div>
<div class="num" style="left:1411.5px;width:200px;top:678px;">2</div>
<div class="num" style="left:1520.5px;width:200px;top:678px;">380,000</div>
<div class="a" style="left:149px;top:695px;width:1px;height:16px;background:#b3a97f;"></div>
<div class="hl" style="left:149px;top:711px;width:1642px;"></div>
<div class="vl" style="left:1217px;top:695px;height:16px;"></div>
<div class="vl" style="left:1340px;top:695px;height:16px;"></div>
<div class="vl" style="left:1420px;top:695px;height:16px;"></div>
<div class="vl" style="left:1535px;top:695px;height:16px;"></div>
<div class="vl" style="left:1615px;top:695px;height:16px;"></div>
<div class="vl" style="left:1724px;top:695px;height:16px;"></div>
<div class="vl" style="left:507px;top:695px;height:16px;"></div>
<div class="vl" style="left:804px;top:695px;height:16px;"></div>
<div class="dt" style="left:208px;top:695px;">Артмарк ООО</div>
<div class="dt" style="left:511px;top:695px;">WEB Site E-TRAFFIC точка входа 1</div>
<div class="dt" style="left:808px;top:695px;">Site E-TRAFFIC.RU Web Пользователь 1</div>
<div class="num" style="left:1013.5px;width:200px;top:695px;">1</div>
<div class="num" style="left:1136.5px;width:200px;top:695px;">950,000</div>
<div class="num" style="left:1411.5px;width:200px;top:695px;">2</div>
<div class="num" style="left:1520.5px;width:200px;top:695px;">380,000</div>
<div class="a" style="left:149px;top:712px;width:1px;height:16px;background:#b3a97f;"></div>
<div class="hl" style="left:149px;top:728px;width:1642px;"></div>
<div class="vl" style="left:1217px;top:712px;height:16px;"></div>
<div class="vl" style="left:1340px;top:712px;height:16px;"></div>
<div class="vl" style="left:1420px;top:712px;height:16px;"></div>
<div class="vl" style="left:1535px;top:712px;height:16px;"></div>
<div class="vl" style="left:1615px;top:712px;height:16px;"></div>
<div class="vl" style="left:1724px;top:712px;height:16px;"></div>
<div class="dt" style="left:222px;top:712px;">01.06.2023</div>
<div class="num" style="left:1013.5px;width:200px;top:712px;">1</div>
<div class="num" style="left:1136.5px;width:200px;top:712px;">950,000</div>
<div class="num" style="left:1411.5px;width:200px;top:712px;">2</div>
<div class="num" style="left:1520.5px;width:200px;top:712px;">380,000</div>
<div class="a" style="left:149px;top:729px;width:1px;height:16px;background:#b3a97f;"></div>
<div class="hl" style="left:149px;top:745px;width:1642px;"></div>
<div class="vl" style="left:1217px;top:729px;height:16px;"></div>
<div class="vl" style="left:1340px;top:729px;height:16px;"></div>
<div class="vl" style="left:1420px;top:729px;height:16px;"></div>
<div class="vl" style="left:1535px;top:729px;height:16px;"></div>
<div class="vl" style="left:1615px;top:729px;height:16px;"></div>
<div class="vl" style="left:1724px;top:729px;height:16px;"></div>
<div class="dt" style="left:236px;top:729px;">Билеты по которым совершены операции Одной Организацией</div>
<div class="num" style="left:1013.5px;width:200px;top:729px;">1</div>
<div class="num" style="left:1136.5px;width:200px;top:729px;">950,000</div>
<div class="num" style="left:1411.5px;width:200px;top:729px;">2</div>
<div class="num" style="left:1520.5px;width:200px;top:729px;">380,000</div>
<div class="a" style="left:149px;top:746px;width:1642px;height:16px;background:#e2fcd6;"></div>
<div class="hl" style="left:149px;top:762px;width:1642px;"></div>
<div class="vl" style="left:1217px;top:746px;height:16px;"></div>
<div class="vl" style="left:1340px;top:746px;height:16px;"></div>
<div class="vl" style="left:1420px;top:746px;height:16px;"></div>
<div class="vl" style="left:1535px;top:746px;height:16px;"></div>
<div class="vl" style="left:1615px;top:746px;height:16px;"></div>
<div class="vl" style="left:1724px;top:746px;height:16px;"></div>
<div class="dt" style="left:250px;top:746px;">аэропорт Толмачево</div>
<div class="num" style="left:1013.5px;width:200px;top:746px;">1</div>
<div class="num" style="left:1136.5px;width:200px;top:746px;">950,000</div>
<div class="num" style="left:1411.5px;width:200px;top:746px;">2</div>
<div class="num" style="left:1520.5px;width:200px;top:746px;">380,000</div>
<div class="a" style="left:152px;top:407px;width:82px;height:15px;background:linear-gradient(90deg,#ece9dc,#f2f2f2 15%,#f3f3f3 85%,#fff);"></div>
<div class="a" style="left:157px;top:410px;width:45px;height:10px;border-radius:5px;background:#c9c9c9;filter:blur(3px);"></div>
<div class="a" style="left:215px;top:409px;width:14px;height:11px;border-radius:5px;background:#cdcdcd;filter:blur(3px);"></div>
<div class="a" style="left:1137px;top:164px;width:1px;height:600px;background:#a0a0a0;"></div>
<div class="box" style="left:19px;top:409px;"></div>
<div class="box" style="left:38px;top:425px;"></div>
<div class="box" style="left:57px;top:442px;"></div>
<div class="box" style="left:76px;top:459px;"></div>
<div class="box" style="left:95px;top:476px;"></div>
<div class="box" style="left:114px;top:493px;"></div>
<div class="box" style="left:133px;top:510px;"></div>
<div class="box" style="left:38px;top:544px;"></div>
<div class="box" style="left:57px;top:561px;"></div>
<div class="box" style="left:76px;top:578px;"></div>
<div class="box" style="left:95px;top:595px;"></div>
<div class="box" style="left:114px;top:612px;"></div>
<div class="box" style="left:133px;top:629px;"></div>
<div class="box" style="left:57px;top:663px;"></div>
<div class="box" style="left:76px;top:680px;"></div>
<div class="box" style="left:95px;top:697px;"></div>
<div class="box" style="left:114px;top:714px;"></div>
<div class="box" style="left:133px;top:731px;"></div>
<div class="tl" style="left:25px;top:421px;width:1px;height:341px;"></div>
<div class="tl" style="left:44px;top:438px;width:1px;height:102px;"></div>
<div class="tl" style="left:44px;top:540px;width:10px;height:1px;"></div>
<div class="tl" style="left:63px;top:455px;width:1px;height:85px;"></div>
<div class="tl" style="left:63px;top:540px;width:10px;height:1px;"></div>
<div class="tl" style="left:82px;top:472px;width:1px;height:68px;"></div>
<div class="tl" style="left:82px;top:540px;width:10px;height:1px;"></div>
<div class="tl" style="left:101px;top:489px;width:1px;height:51px;"></div>
<div class="tl" style="left:101px;top:540px;width:10px;height:1px;"></div>
<div class="tl" style="left:120px;top:506px;width:1px;height:34px;"></div>
<div class="tl" style="left:120px;top:540px;width:10px;height:1px;"></div>
<div class="tl" style="left:139px;top:523px;width:1px;height:17px;"></div>
<div class="tl" style="left:139px;top:540px;width:10px;height:1px;"></div>
<div class="tl" style="left:44px;top:557px;width:1px;height:205px;"></div>
<div class="tl" style="left:63px;top:574px;width:1px;height:85px;"></div>
<div class="tl" style="left:63px;top:659px;width:10px;height:1px;"></div>
<div class="tl" style="left:82px;top:591px;width:1px;height:68px;"></div>
<div class="tl" style="left:82px;top:659px;width:10px;height:1px;"></div>
<div class="tl" style="left:101px;top:608px;width:1px;height:51px;"></div>
<div class="tl" style="left:101px;top:659px;width:10px;height:1px;"></div>
<div class="tl" style="left:120px;top:625px;width:1px;height:34px;"></div>
<div class="tl" style="left:120px;top:659px;width:10px;height:1px;"></div>
<div class="tl" style="left:139px;top:642px;width:1px;height:17px;"></div>
<div class="tl" style="left:139px;top:659px;width:10px;height:1px;"></div>
<div class="tl" style="left:63px;top:676px;width:1px;height:85px;"></div>
<div class="tl" style="left:63px;top:761px;width:10px;height:1px;"></div>
<div class="tl" style="left:82px;top:693px;width:1px;height:68px;"></div>
<div class="tl" style="left:82px;top:761px;width:10px;height:1px;"></div>
<div class="tl" style="left:101px;top:710px;width:1px;height:51px;"></div>
<div class="tl" style="left:101px;top:761px;width:10px;height:1px;"></div>
<div class="tl" style="left:120px;top:727px;width:1px;height:34px;"></div>
<div class="tl" style="left:120px;top:761px;width:10px;height:1px;"></div>
<div class="tl" style="left:139px;top:744px;width:1px;height:17px;"></div>
<div class="tl" style="left:139px;top:761px;width:10px;height:1px;"></div>
<svg class="a" style="left:0;top:0;overflow:visible" width="1800" height="771">
<defs><filter id="sh" x="-30%" y="-30%" width="160%" height="160%">
<feGaussianBlur in="SourceAlpha" stdDeviation="2"/><feOffset dx="2.5" dy="2.5" result="b"/>
<feComponentTransfer><feFuncA type="linear" slope="0.75"/></feComponentTransfer>
<feMerge><feMergeNode/><feMergeNode in="SourceGraphic"/></feMerge></filter></defs>
<g filter="url(#sh)" fill="#ff0000" stroke="#fff" stroke-width="2.2" stroke-linejoin="round" style="paint-order:stroke">
<path d="M1344.72 154.83 L1295.39 201.35 L1292.98 194.80 L1283.20 218.10 L1306.28 207.80 L1299.68 205.54 L1345.08 155.17 Z"/><path d="M1360.20 163.34 L1384.70 202.70 L1377.83 203.90 L1399.00 217.70 L1393.01 193.15 L1389.60 199.24 L1360.60 163.06 Z"/><path d="M1649.18 172.88 L1597.67 197.29 L1597.34 190.32 L1581.00 209.60 L1606.11 206.73 L1600.49 202.58 L1649.42 173.32 Z"/><path d="M1663.69 169.22 L1729.94 205.66 L1724.43 209.94 L1749.60 212.20 L1732.79 193.33 L1732.64 200.30 L1663.91 168.78 Z"/>
</g></svg>
</div></div></body></html>
